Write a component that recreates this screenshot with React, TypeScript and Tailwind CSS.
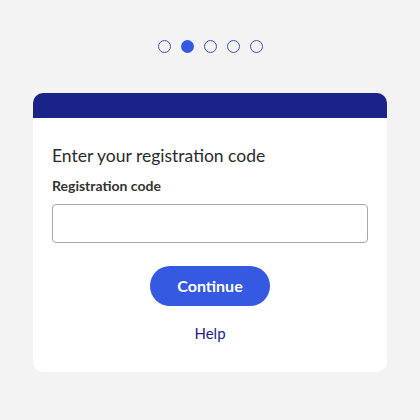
import React from "react";

const Dot = ({ active }: { active?: boolean }) =>
  active ? (
    <span className="block h-[13px] w-[13px] rounded-full bg-[#3559e0]" />
  ) : (
    <span className="block h-[13px] w-[13px] rounded-full border-[1.5px] border-[#3f51b5]" />
  );

export default function App() {
  return (
    <div
      className="flex h-[420px] w-[420px] flex-col items-center bg-[#f3f3f3] pt-[40px]"
      style={{ fontFamily: '"Lato", "Noto Sans", sans-serif' }}
    >
      <div className="flex items-center gap-[10px]">
        <Dot />
        <Dot active />
        <Dot />
        <Dot />
        <Dot />
      </div>

      <div className="mt-[40px] w-[354px] overflow-hidden rounded-[10px] bg-white">
        <div className="h-[25px] bg-[#1a2388]" />
        <div className="flex flex-col px-[19px] pt-[26px] pb-[28px]">
          <h1 className="text-[17.5px] leading-[24px] text-[#2b2b2b]">Enter your registration code</h1>
          <label className="mt-[8px] text-[14px] font-bold leading-[20px] text-[#333]">Registration code</label>
          <input
            type="text"
            className="mt-[8px] h-[39px] w-[316px] rounded-[4px] border border-[#a8a8a8] bg-white px-3 outline-none"
          />
          <button className="mx-auto mt-[23px] h-[40px] w-[120px] rounded-full bg-[#3559e0] text-[16px] font-bold text-white">
            Continue
          </button>
          <a className="mx-auto mt-[16px] text-[15px] leading-[22px] text-[#1a2388]">Help</a>
        </div>
      </div>
    </div>
  );
}
